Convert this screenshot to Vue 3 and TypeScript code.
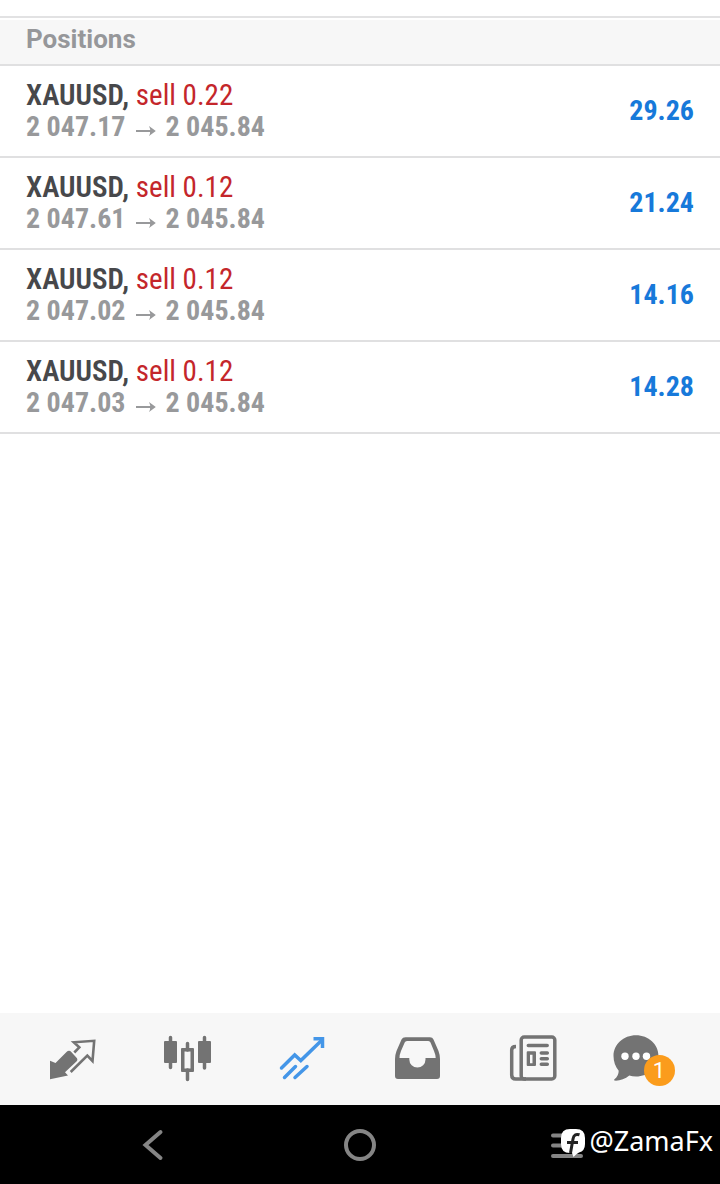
<script setup lang="ts">
import { ref } from 'vue'

interface Position {
  id: number
  symbol: string
  side: string
  volume: string
  open: string
  current: string
  profit: string
}

type Tab = 'quotes' | 'charts' | 'trade' | 'history' | 'news' | 'messages'

const positions: Position[] = [
  { id: 1, symbol: 'XAUUSD', side: 'sell', volume: '0.22', open: '2 047.17', current: '2 045.84', profit: '29.26' },
  { id: 2, symbol: 'XAUUSD', side: 'sell', volume: '0.12', open: '2 047.61', current: '2 045.84', profit: '21.24' },
  { id: 3, symbol: 'XAUUSD', side: 'sell', volume: '0.12', open: '2 047.02', current: '2 045.84', profit: '14.16' },
  { id: 4, symbol: 'XAUUSD', side: 'sell', volume: '0.12', open: '2 047.03', current: '2 045.84', profit: '14.28' },
]

const active = ref<Tab>('trade')
</script>

<template>
  <div class="screen">
    <main class="content">
      <h2 class="section-title">Positions</h2>
      <ul class="positions">
        <li v-for="p in positions" :key="p.id" class="position">
          <div class="details">
            <div class="deal"><strong>{{ p.symbol }},</strong>&nbsp;<span class="side">{{ p.side }} {{ p.volume }}</span></div>
            <div class="prices">
              <span>{{ p.open }}</span>
              <svg class="arrow" viewBox="0 0 20 12" aria-hidden="true"><path d="M0 6H17" /><path class="head" d="M13 1L19.800 6L13 11Q15.500 6 13 1Z" /></svg>
              <span>{{ p.current }}</span>
            </div>
          </div>
          <div class="profit">{{ p.profit }}</div>
        </li>
      </ul>
    </main>

    <nav class="tabs">
      <button class="tab" :class="{ active: active === 'quotes' }" aria-label="Quotes" @click="active = 'quotes'">
        <svg viewBox="0 0 61 60">
          <path class="solid" d="M8 31.700L13.500 34L24.500 23Q27 20.800 29.300 22.900L35 29.200Q36 31 34.700 32.300L23 43.300L26 46.600L8 50.200Z" />
          <path class="line thin" d="M32.300 23.500L37.300 18.300L31.800 13.300L52.200 11.800L50.500 32L45.300 26.500L28.700 43" />
        </svg>
      </button>
      <button class="tab" :class="{ active: active === 'charts' }" aria-label="Charts" @click="active = 'charts'">
        <svg viewBox="0 0 61 60">
          <path class="line wick" d="M13.500 8.500V38.500M30.500 14.500V21M30.500 41V50.500M47.500 8.500V39" />
          <rect class="solid" x="7" y="12" width="13" height="22" rx="1" />
          <rect class="solid" x="41" y="12" width="13" height="22" rx="1" />
          <path class="solid" fill-rule="evenodd" d="M25 19H36Q37 19 37 20V42Q37 43 36 43H25Q24 43 24 42V20Q24 19 25 19ZM27.500 22.500V39.500H33.500V22.500Z" />
        </svg>
      </button>
      <button class="tab" :class="{ active: active === 'trade' }" aria-label="Trade" @click="active = 'trade'">
        <svg viewBox="0 0 61 60">
          <path class="line" d="M9.500 39L22.700 26L28.800 31.500L50 11M12.500 48.500L23.500 37.500M23 48.500L35 37.500" stroke-linecap="round" />
          <path class="line" d="M41.500 9.800H50.500V19" />
        </svg>
      </button>
      <button class="tab" :class="{ active: active === 'history' }" aria-label="History" @click="active = 'history'">
        <svg viewBox="0 0 61 60">
          <path class="solid" fill-rule="evenodd" d="M18.500 8.300H43Q45.500 8.300 46.500 10.500L51.500 22Q53 26 53 30V47Q53 50 50 50H11Q8 50 8 47V30Q8 26 9.500 22L14.500 10.500Q15.500 8.300 18.500 8.300ZM20 12Q18.300 12 17.700 13.500L14 22Q12.500 25.500 12.500 29H22.300V30.500A8.100 8.100 0 0 0 38.500 30.500V29H48.700Q48.500 25.500 47 22L43.500 13.500Q43 12 41.300 12Z" />
        </svg>
      </button>
      <button class="tab" :class="{ active: active === 'news' }" aria-label="News" @click="active = 'news'">
        <svg viewBox="0 0 61 60">
          <rect class="line" x="19.200" y="8" width="33.600" height="42" rx="3" />
          <path class="line" d="M14 17.500Q9.700 17.500 9.700 21V46Q9.700 50 13.700 50H24" stroke-linecap="butt" />
          <path class="line" d="M26.300 16.500H45.200M39.300 24H45.300M39.300 29.700H45.300M39.300 35.300H45.300" stroke-linecap="round" />
          <path class="solid" fill-rule="evenodd" d="M25.700 22.300H33Q34 22.300 34 23.300V36Q34 37 33 37H25.700Q24.700 37 24.700 36V23.300Q24.700 22.300 25.700 22.300ZM28 25.700V34.300H30.500V25.700Z" />
        </svg>
      </button>
      <button class="tab" :class="{ active: active === 'messages' }" aria-label="Messages, 1 unread" @click="active = 'messages'">
        <svg viewBox="0 0 61 60">
          <path class="solid" d="M19 6.300C31.500 6.300 41.500 15.400 41.500 27S31.500 47.500 19 47.500C16.500 47.500 14.300 47.200 12.300 46.500C8 50 2.500 52 -2.500 51.600Q-3.500 51.300 -2.700 50.600C0.500 47.500 1.700 44.800 1.700 41.700C-1.600 38 -3.500 32.500 -3.500 27C-3.500 15.400 6.500 6.300 19 6.300Z" />
          <g class="dots"><circle cx="8" cy="27.300" r="3.700" /><circle cx="19" cy="27.300" r="3.700" /><circle cx="29.500" cy="27.300" r="3.700" /></g>
        </svg>
        <span class="badge">1</span>
      </button>
    </nav>

    <nav class="system">
      <button class="key" aria-label="Back"><svg viewBox="0 0 40 40"><path d="M27.500 7L12.500 20L27.500 33" /></svg></button>
      <button class="key" aria-label="Home"><svg viewBox="0 0 40 40"><circle cx="20" cy="20" r="14" /></svg></button>
      <button class="key" aria-label="Menu"><svg viewBox="0 0 40 40"><path d="M6 10.500H34M6 20.500H34M6 31H34" /></svg></button>
      <div class="handle">
        <svg viewBox="0 0 24 28" aria-hidden="true">
          <path fill="#fff" d="M9 0H15Q24 0 24 9V15Q24 22 18 23.500Q15.500 24.500 12.500 28L11 24H9Q0 24 0 15V9Q0 0 9 0Z" />
          <path class="f" d="M18.500 5.800Q13 4 12 10L9.500 24M6 13.500H17" />
        </svg>
        <span>@ZamaFx</span>
      </div>
    </nav>
  </div>
</template>

<style>
body {
  margin: 0;
}
</style>

<style scoped>
.screen {
  display: flex;
  flex-direction: column;
  min-height: 100vh;
  background: #fff;
  font-family: Roboto, "Liberation Sans", sans-serif;
}

.content {
  flex: 1;
  margin-top: 16px;
  padding-top: 2px;
  border-top: 2px solid #e2e2e3;
}

.section-title {
  margin: 0;
  padding: 4px 26px 10px;
  border-bottom: 2px solid #e0e0e1;
  background: #f7f7f7;
  color: #96979a;
  font-size: 26px;
  font-weight: 700;
  line-height: 30px;
}

.positions {
  margin: 0;
  padding: 0;
  list-style: none;
}

.position {
  display: flex;
  align-items: center;
  justify-content: space-between;
  padding: 13px 26px;
  border-bottom: 2px solid #e0e0e1;
  font-family: "Roboto Condensed", Roboto, sans-serif;
  font-size: 28px;
  line-height: 32px;
}

.deal {
  color: #47484b;
  font-size: 29px;
}

.deal strong {
  font-weight: 600;
}

.side {
  color: #c4262b;
}

.prices {
  display: flex;
  align-items: center;
  color: #98999b;
  font-weight: 700;
}

.arrow {
  width: 20px;
  height: 12px;
  margin: 8px 10px 0;
  fill: none;
  stroke: currentColor;
  stroke-width: 2;
}

.head {
  fill: currentColor;
  stroke: none;
}

.profit {
  color: #1779da;
  font-weight: 700;
}

button {
  padding: 0;
  border: 0;
  background: none;
  cursor: pointer;
}

.tabs {
  display: flex;
  padding: 0 15px;
  background: #f7f7f7;
}

.tab {
  position: relative;
  display: flex;
  flex: 1;
  align-items: center;
  justify-content: center;
  height: 92px;
  color: #737373;
}

.tab.active {
  color: #4496e8;
}

.tab svg {
  width: 61px;
  height: 60px;
  overflow: visible;
}

.solid {
  fill: currentColor;
}

.line {
  fill: none;
  stroke: currentColor;
  stroke-width: 3.5;
}

.thin {
  stroke-width: 2.6;
}

.wick {
  stroke-linecap: round;
}

.dots {
  fill: #fff;
}

.badge {
  position: absolute;
  top: 42px;
  left: calc(50% - 4px);
  width: 31px;
  border-radius: 50%;
  background: #fb9c1c;
  color: #fff;
  font-family: Roboto, sans-serif;
  font-size: 22px;
  line-height: 31px;
  text-align: center;
}

.system {
  position: relative;
  display: flex;
  padding: 0 50px;
  background: #000;
}

.key {
  display: flex;
  flex: 1;
  align-items: center;
  justify-content: center;
  height: 79px;
}

.key svg {
  width: 40px;
  height: 40px;
  fill: none;
  stroke: #858585;
  stroke-width: 4;
  stroke-linecap: round;
}

.handle {
  position: absolute;
  top: 20px;
  right: 7px;
  display: flex;
  align-items: center;
  gap: 4px;
  color: #fff;
  font-family: "Noto Sans", sans-serif;
  font-size: 27px;
  line-height: 32px;
}

.handle svg {
  width: 24px;
  height: 28px;
  margin-top: 4px;
}

.f {
  fill: none;
  stroke: #222;
  stroke-width: 3;
}
</style>
